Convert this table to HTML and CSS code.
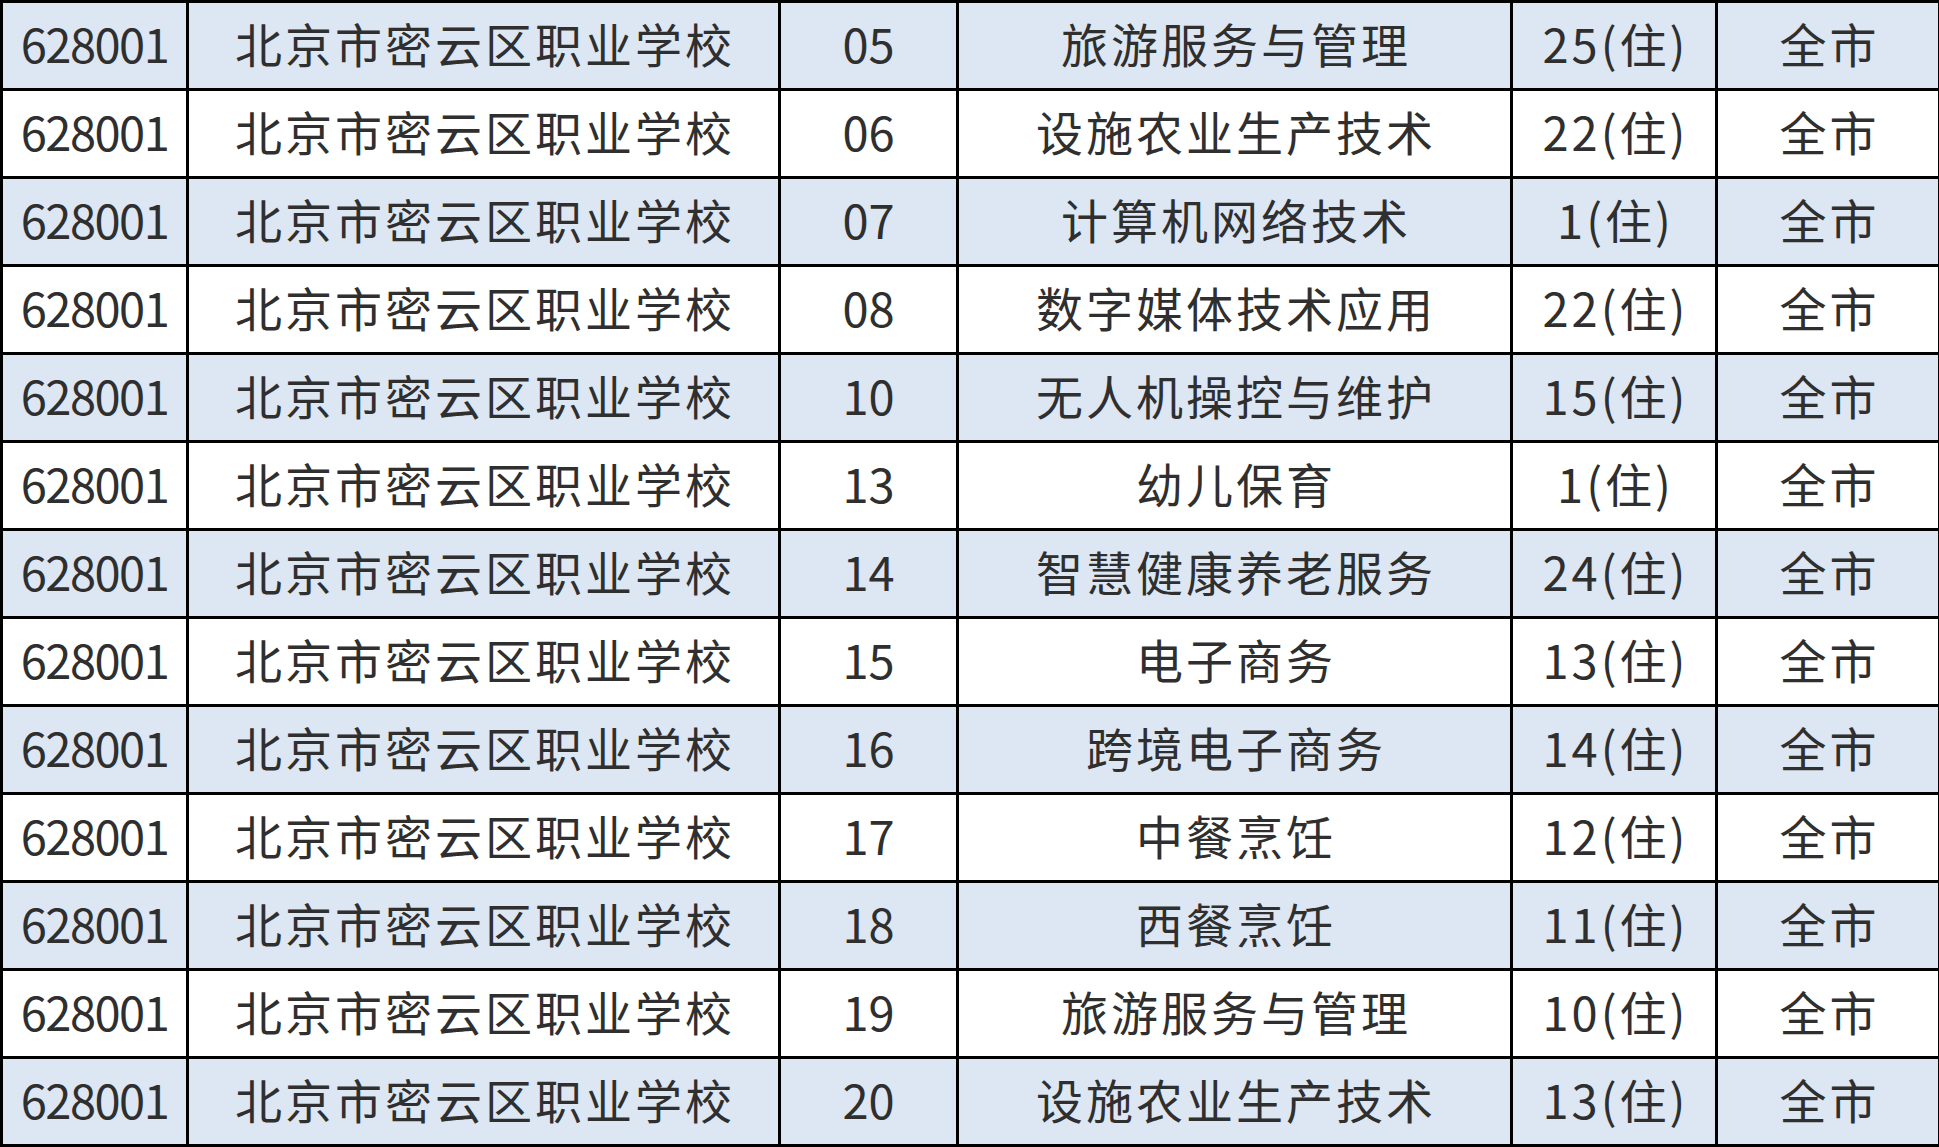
FILE: index.html
```html
<!DOCTYPE html>
<html lang="zh-CN">
<head>
<meta charset="utf-8">
<title>招生计划</title>
<link rel="stylesheet" href="styles.css">
</head>
<body>
<table class="plan">
  <colgroup>
    <col class="c-code"><col class="c-school"><col class="c-no"><col class="c-major"><col class="c-num"><col class="c-area">
  </colgroup>
  <tbody>
    <tr class="alt"><td class="code">628001</td><td class="cjk">北京市密云区职业学校</td><td>05</td><td class="cjk">旅游服务与管理</td><td class="num">25(住)</td><td class="cjk">全市</td></tr>
    <tr><td class="code">628001</td><td class="cjk">北京市密云区职业学校</td><td>06</td><td class="cjk">设施农业生产技术</td><td class="num">22(住)</td><td class="cjk">全市</td></tr>
    <tr class="alt"><td class="code">628001</td><td class="cjk">北京市密云区职业学校</td><td>07</td><td class="cjk">计算机网络技术</td><td class="num">1(住)</td><td class="cjk">全市</td></tr>
    <tr><td class="code">628001</td><td class="cjk">北京市密云区职业学校</td><td>08</td><td class="cjk">数字媒体技术应用</td><td class="num">22(住)</td><td class="cjk">全市</td></tr>
    <tr class="alt"><td class="code">628001</td><td class="cjk">北京市密云区职业学校</td><td>10</td><td class="cjk">无人机操控与维护</td><td class="num">15(住)</td><td class="cjk">全市</td></tr>
    <tr><td class="code">628001</td><td class="cjk">北京市密云区职业学校</td><td>13</td><td class="cjk">幼儿保育</td><td class="num">1(住)</td><td class="cjk">全市</td></tr>
    <tr class="alt"><td class="code">628001</td><td class="cjk">北京市密云区职业学校</td><td>14</td><td class="cjk">智慧健康养老服务</td><td class="num">24(住)</td><td class="cjk">全市</td></tr>
    <tr><td class="code">628001</td><td class="cjk">北京市密云区职业学校</td><td>15</td><td class="cjk">电子商务</td><td class="num">13(住)</td><td class="cjk">全市</td></tr>
    <tr class="alt"><td class="code">628001</td><td class="cjk">北京市密云区职业学校</td><td>16</td><td class="cjk">跨境电子商务</td><td class="num">14(住)</td><td class="cjk">全市</td></tr>
    <tr><td class="code">628001</td><td class="cjk">北京市密云区职业学校</td><td>17</td><td class="cjk">中餐烹饪</td><td class="num">12(住)</td><td class="cjk">全市</td></tr>
    <tr class="alt"><td class="code">628001</td><td class="cjk">北京市密云区职业学校</td><td>18</td><td class="cjk">西餐烹饪</td><td class="num">11(住)</td><td class="cjk">全市</td></tr>
    <tr><td class="code">628001</td><td class="cjk">北京市密云区职业学校</td><td>19</td><td class="cjk">旅游服务与管理</td><td class="num">10(住)</td><td class="cjk">全市</td></tr>
    <tr class="alt"><td class="code">628001</td><td class="cjk">北京市密云区职业学校</td><td>20</td><td class="cjk">设施农业生产技术</td><td class="num">13(住)</td><td class="cjk">全市</td></tr>
  </tbody>
</table>
</body>
</html>
```

FILE: styles.css
```css
html, body {
  margin: 0;
  padding: 0;
  background: #ffffff;
}

.plan {
  width: 1938px;
  border-collapse: collapse;
  table-layout: fixed;
  font-family: "Noto Sans CJK SC", "Noto Sans", sans-serif;
  font-size: 47px;
  color: #2f2f2f;
}

.c-code { width: 186px; }
.c-school { width: 592px; }
.c-no { width: 178px; }
.c-major { width: 554px; }
.c-num { width: 205px; }
.c-area { width: 223px; }

.plan td {
  height: 79px;
  padding: 0 0 6px 0;
  border: 3px solid #000000;
  text-align: center;
  vertical-align: middle;
  line-height: 1;
  white-space: nowrap;
}

.plan td.code {
  letter-spacing: -1.5px;
}

.plan td.cjk {
  letter-spacing: 3px;
  text-indent: 3px;
}

.plan td.num {
  letter-spacing: 3px;
  text-indent: 3px;
}

.plan tr.alt td {
  background: #dde7f3;
}
```
